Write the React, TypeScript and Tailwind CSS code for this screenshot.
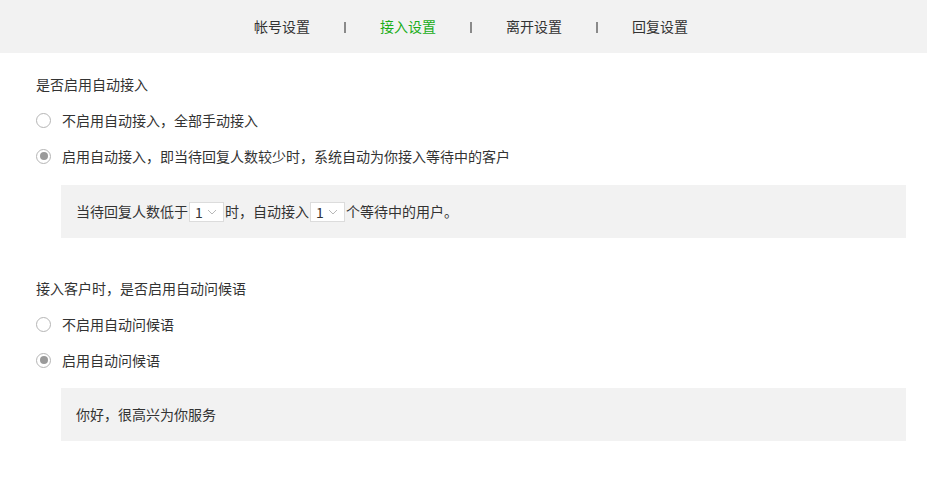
import React from "react";

const tabs = ["帐号设置", "接入设置", "离开设置", "回复设置"];

function Radio({ checked }: { checked?: boolean }) {
  return (
    <span className="w-[15px] h-[15px] rounded-full border border-[#b5b5b5] bg-white flex items-center justify-center shrink-0">
      {checked && <span className="w-[8px] h-[8px] rounded-full bg-[#9a9a9a]" />}
    </span>
  );
}

function Select({ value }: { value: string }) {
  return (
    <span className="inline-flex items-center w-[35px] h-[20px] border border-[#dcdcdc] bg-white mx-[1px] pl-[5px] gap-[4px] text-[14px] text-[#333]">
      <span className="leading-none">{value}</span>
      <svg width="10" height="6" viewBox="0 0 10 6" className="mt-[1px]">
        <path d="M1 1 L5 5 L9 1" fill="none" stroke="#b8b8b8" strokeWidth="1" />
      </svg>
    </span>
  );
}

export default function App() {
  return (
    <div
      className="min-h-[480px] bg-white text-[14px] text-[#333]"
      style={{ fontFamily: '"Noto Sans CJK SC", "Noto Sans", sans-serif' }}
    >
      <div className="h-[53px] bg-[#f2f2f2] flex items-center justify-center pl-[15px] gap-[34px]">
        {tabs.map((t, i) => (
          <React.Fragment key={t}>
            {i > 0 && <span className="w-[2px] h-[11px] bg-[#8a8a8a] mt-[2px]" />}
            <span className={i === 1 ? "text-[#1aad19]" : "text-[#333]"}>{t}</span>
          </React.Fragment>
        ))}
      </div>

      <main className="pl-[36px] pr-[21px] pt-[13px]">
        <div className="h-9 flex items-center">是否启用自动接入</div>
        <label className="h-9 flex items-center gap-[11px]">
          <Radio />
          <span>不启用自动接入，全部手动接入</span>
        </label>
        <label className="h-9 flex items-center gap-[11px]">
          <Radio checked />
          <span>启用自动接入，即当待回复人数较少时，系统自动为你接入等待中的客户</span>
        </label>
        <div className="mt-[11px] ml-[25px] h-[53px] bg-[#f2f2f2] flex items-center pl-[15px]">
          当待回复人数低于<Select value="1" />时，自动接入<Select value="1" />个等待中的用户。
        </div>

        <div className="mt-[32px] h-9 flex items-center">接入客户时，是否启用自动问候语</div>
        <label className="h-9 flex items-center gap-[11px]">
          <Radio />
          <span>不启用自动问候语</span>
        </label>
        <label className="h-9 flex items-center gap-[11px]">
          <Radio checked />
          <span>启用自动问候语</span>
        </label>
        <div className="mt-[10px] ml-[25px] h-[53px] bg-[#f2f2f2] flex items-center pl-[15px]">
          你好，很高兴为你服务
        </div>
      </main>
    </div>
  );
}
